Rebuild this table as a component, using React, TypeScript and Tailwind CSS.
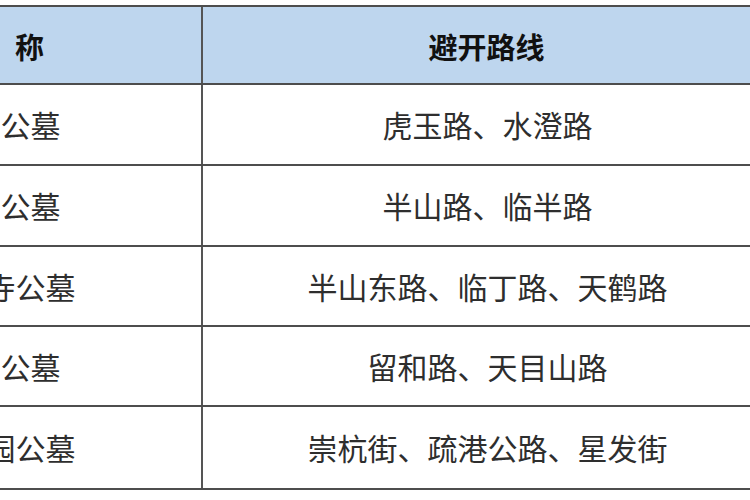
import React from 'react';

const rows = [
  { name: '南山公墓', route: '虎玉路、水澄路', h: 'h-[81px]' },
  { name: '半山公墓', route: '半山路、临半路', h: 'h-[81px]' },
  { name: '皋亭寺公墓', route: '半山东路、临丁路、天鹤路', h: 'h-[80px]' },
  { name: '留下公墓', route: '留和路、天目山路', h: 'h-[80px]' },
  { name: '崇贤园公墓', route: '崇杭街、疏港公路、星发街', h: 'h-[81px]' },
];

const App: React.FC = () => {
  return (
    <div
      className="w-[750px] h-[500px] overflow-hidden bg-white pt-[5px]"
      style={{ fontFamily: '"Noto Sans CJK SC", "Noto Sans", sans-serif' }}
    >
      <div className="ml-[-200px] w-[976px] border-t-2 border-b-2 border-[#4d4d4d]">
        {/* Header */}
        <div className="flex h-[78px] bg-[#bed6ee] border-b-2 border-[#4d4d4d]">
          <div className="w-[403px] shrink-0 border-r-2 border-[#555] flex items-center justify-center pt-[4px] text-[29px] font-bold text-[#111]">
            名　称
          </div>
          <div className="flex-1 flex items-center justify-center pt-[4px] pr-[6px] text-[29px] font-bold text-[#111]">
            避开路线
          </div>
        </div>

        {rows.map((r, i) => (
          <div
            key={r.name}
            className={`flex ${r.h} ${i < rows.length - 1 ? 'border-b-2 border-[#4d4d4d]' : ''}`}
          >
            <div className="w-[403px] shrink-0 border-r-2 border-[#555] flex items-center justify-center text-[30px] text-[#2e2e2e]">
              {r.name}
            </div>
            <div className="flex-1 flex items-center justify-center pr-[4px] text-[30px] text-[#2e2e2e]">
              {r.route}
            </div>
          </div>
        ))}
      </div>
    </div>
  );
};

export default App;
